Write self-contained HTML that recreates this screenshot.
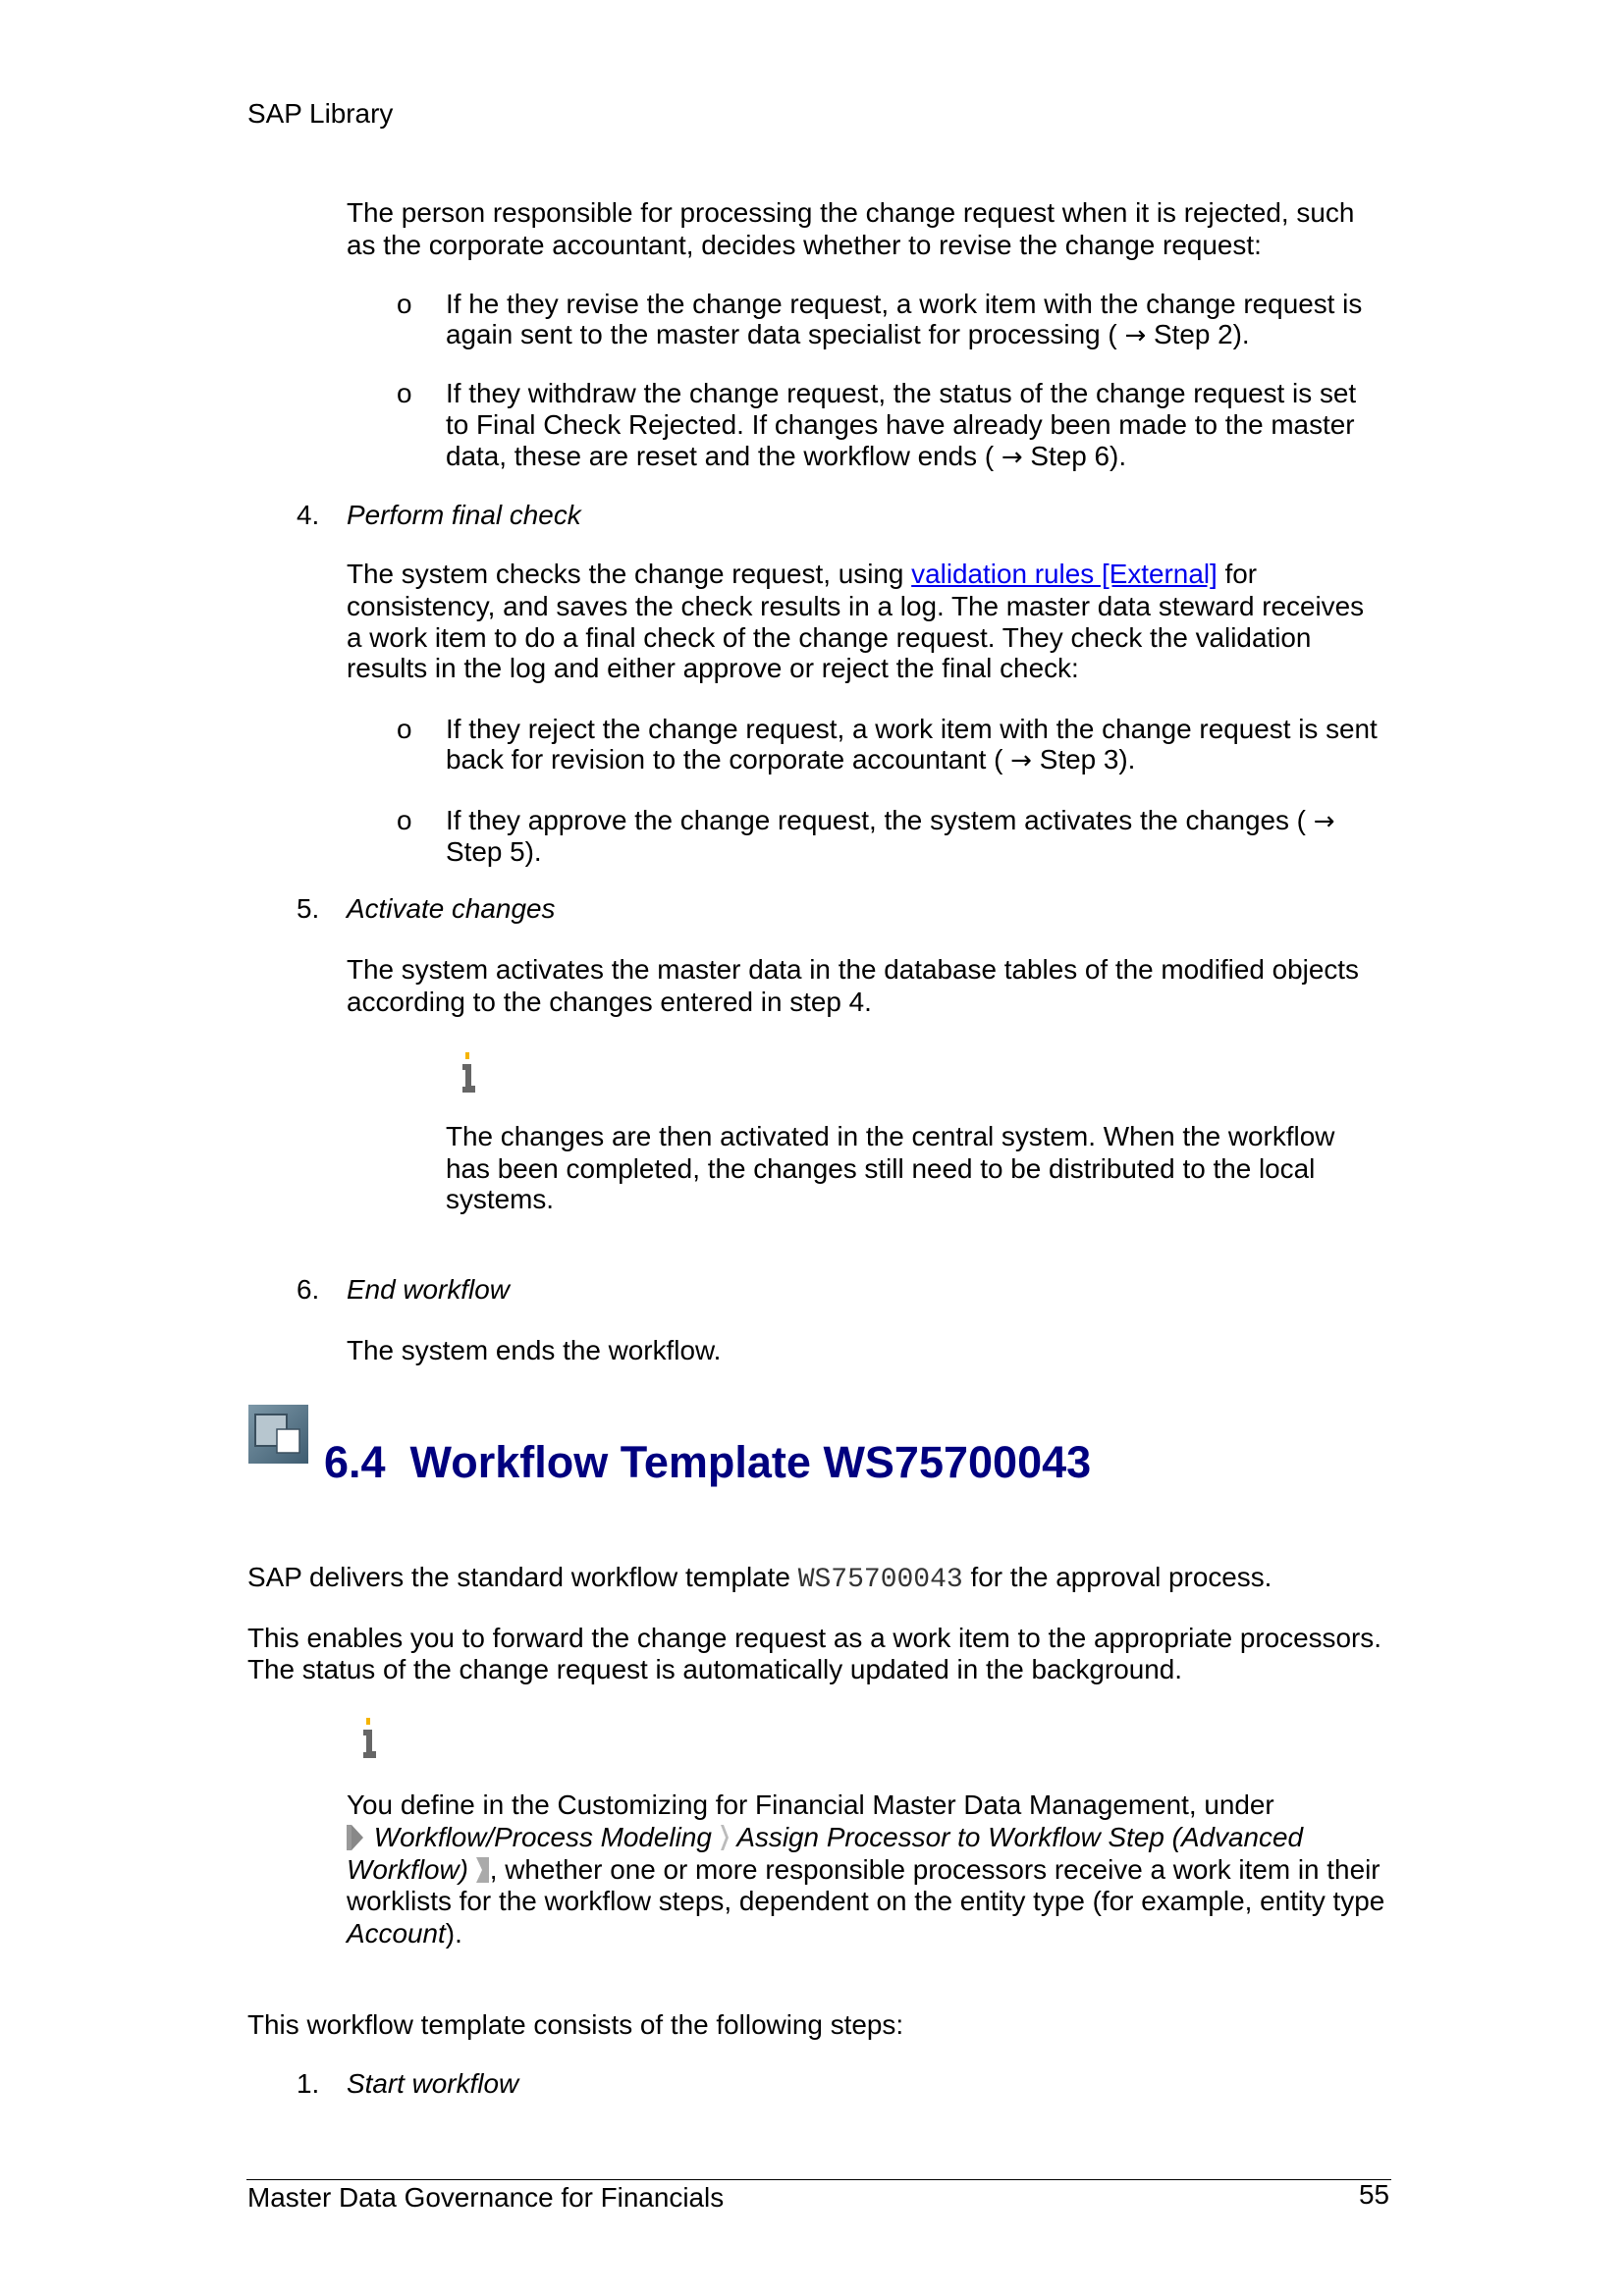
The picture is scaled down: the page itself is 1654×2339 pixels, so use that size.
<!DOCTYPE html>
<html><head><meta charset="utf-8"><style>
body{margin:0;background:#fff}
#p{position:relative;width:1654px;height:2339px;overflow:hidden;font-family:"Liberation Sans",Arial,sans-serif;font-size:27.9px;color:#000}
.l{position:absolute;line-height:32px;white-space:nowrap}
i{font-style:italic}
a{color:#0000ee;text-decoration:underline}
.m{font-family:"Liberation Mono",monospace;font-size:28px;color:#333}
.ar{font-family:"DejaVu Sans",sans-serif;font-size:26px}
</style></head><body><div id="p">
<div class="l" style="left:252px;top:100px">SAP Library</div>
<div class="l" style="left:353px;top:201px">The person responsible for processing the change request when it is rejected, such</div>
<div class="l" style="left:353px;top:234px">as the corporate accountant, decides whether to revise the change request:</div>
<div class="l" style="left:404px;top:294px">o</div>
<div class="l" style="left:454px;top:294px">If he they revise the change request, a work item with the change request is</div>
<div class="l" style="left:454px;top:325px">again sent to the master data specialist for processing ( <span class="ar">→</span> Step 2).</div>
<div class="l" style="left:404px;top:385px">o</div>
<div class="l" style="left:454px;top:385px">If they withdraw the change request, the status of the change request is set</div>
<div class="l" style="left:454px;top:417px">to Final Check Rejected. If changes have already been made to the master</div>
<div class="l" style="left:454px;top:449px">data, these are reset and the workflow ends ( <span class="ar">→</span> Step 6).</div>
<div class="l" style="left:302px;top:509px">4.</div>
<div class="l" style="left:353px;top:509px"><i>Perform final check</i></div>
<div class="l" style="left:353px;top:569px">The system checks the change request, using <a>validation rules [External]</a> for</div>
<div class="l" style="left:353px;top:602px">consistency, and saves the check results in a log. The master data steward receives</div>
<div class="l" style="left:353px;top:634px">a work item to do a final check of the change request. They check the validation</div>
<div class="l" style="left:353px;top:665px">results in the log and either approve or reject the final check:</div>
<div class="l" style="left:404px;top:727px">o</div>
<div class="l" style="left:454px;top:727px">If they reject the change request, a work item with the change request is sent</div>
<div class="l" style="left:454px;top:758px">back for revision to the corporate accountant ( <span class="ar">→</span> Step 3).</div>
<div class="l" style="left:404px;top:820px">o</div>
<div class="l" style="left:454px;top:820px">If they approve the change request, the system activates the changes ( <span class="ar">→</span></div>
<div class="l" style="left:454px;top:852px">Step 5).</div>
<div class="l" style="left:302px;top:910px">5.</div>
<div class="l" style="left:353px;top:910px"><i>Activate changes</i></div>
<div class="l" style="left:353px;top:972px">The system activates the master data in the database tables of the modified objects</div>
<div class="l" style="left:353px;top:1005px">according to the changes entered in step 4.</div>
<svg style="position:absolute;left:468px;top:1070px" width="20" height="45"><rect x="6" y="2" width="4" height="7" fill="#f5b400"/><path d="M3 14h9v22h4v7H3v-6h3V20H3z" fill="#666"/></svg>
<div class="l" style="left:454px;top:1142px">The changes are then activated in the central system. When the workflow</div>
<div class="l" style="left:454px;top:1175px">has been completed, the changes still need to be distributed to the local</div>
<div class="l" style="left:454px;top:1206px">systems.</div>
<div class="l" style="left:302px;top:1298px">6.</div>
<div class="l" style="left:353px;top:1298px"><i>End workflow</i></div>
<div class="l" style="left:353px;top:1360px">The system ends the workflow.</div>
<svg style="position:absolute;left:253px;top:1431px" width="61" height="60"><defs><linearGradient id="g" x1="0" y1="0" x2="1" y2="1"><stop offset="0" stop-color="#7d98a8"/><stop offset="1" stop-color="#3e5c70"/></linearGradient></defs><rect width="61" height="60" fill="url(#g)"/><rect x="7" y="10" width="32" height="32" fill="#b7c6cf" stroke="#3a4f5e" stroke-width="2"/><rect x="29" y="25" width="23" height="24" fill="#fff" stroke="#3a4f5e" stroke-width="1.5"/></svg>
<div class="l" style="left:330px;top:1464px;font-size:45px;font-weight:bold;color:#00007f;line-height:52px">6.4&nbsp; Workflow Template WS75700043</div>
<div class="l" style="left:252px;top:1591px">SAP delivers the standard workflow template <span class="m">WS75700043</span> for the approval process.</div>
<div class="l" style="left:252px;top:1653px">This enables you to forward the change request as a work item to the appropriate processors.</div>
<div class="l" style="left:252px;top:1685px">The status of the change request is automatically updated in the background.</div>
<svg style="position:absolute;left:367px;top:1748px" width="20" height="45"><rect x="6" y="2" width="4" height="7" fill="#f5b400"/><path d="M3 14h9v22h4v7H3v-6h3V20H3z" fill="#666"/></svg>
<div class="l" style="left:353px;top:1823px">You define in the Customizing for Financial Master Data Management, under</div>
<div class="l" style="left:353px;top:1856px"><svg width="20" height="26" style="vertical-align:-4px"><rect x="0" y="0" width="5" height="26" fill="#999"/><path d="M5 0l12 13-12 13z" fill="#888"/></svg> <i>Workflow/Process Modeling</i> <svg width="10" height="26" style="vertical-align:-4px"><path d="M1 0h3l5 13-5 13H1l5-13z" fill="#bbb"/></svg> <i>Assign Processor to Workflow Step (Advanced</i></div>
<div class="l" style="left:353px;top:1889px"><i>Workflow)</i> <svg width="14" height="26" style="vertical-align:-4px"><path d="M0 0h13v26H0l6-13z" fill="#aaa"/></svg>, whether one or more responsible processors receive a work item in their</div>
<div class="l" style="left:353px;top:1921px">worklists for the workflow steps, dependent on the entity type (for example, entity type</div>
<div class="l" style="left:353px;top:1954px"><i>Account</i>).</div>
<div class="l" style="left:252px;top:2047px">This workflow template consists of the following steps:</div>
<div class="l" style="left:302px;top:2107px">1.</div>
<div class="l" style="left:353px;top:2107px"><i>Start workflow</i></div>
<div style="position:absolute;left:251px;top:2220px;width:1166px;height:1px;background:#000"></div>
<div class="l" style="left:252px;top:2223px">Master Data Governance for Financials</div>
<div class="l" style="left:1384px;top:2220px">55</div>
</div></body></html>
